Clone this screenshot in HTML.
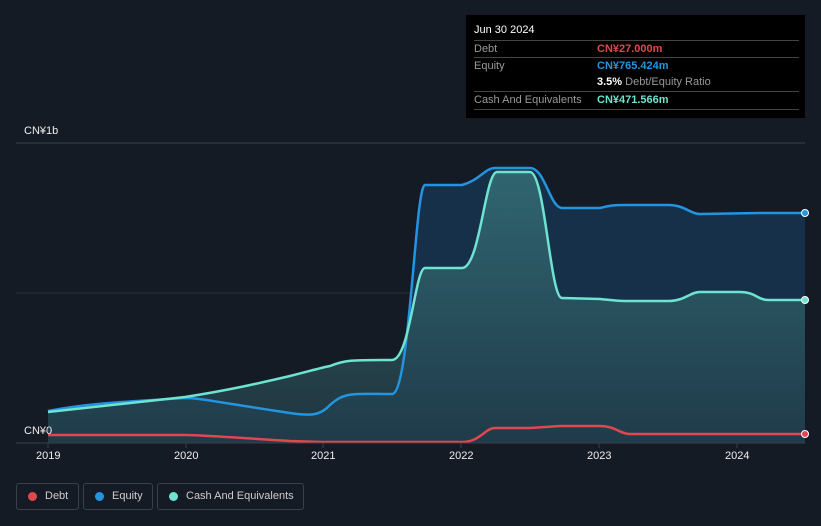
<!DOCTYPE html>
<html><head><meta charset="utf-8"><style>
html,body{margin:0;width:821px;height:526px;overflow:hidden}
body{background:#151b25;font-family:"Liberation Sans","Noto Sans CJK SC",sans-serif;position:relative}
.tt{position:absolute;left:466px;top:15px;width:339px;height:103px;background:#000;color:#fff;font-size:11px}
.row{position:absolute;left:8px;width:325px;border-top:1px solid #444;height:17px;line-height:17px;color:#999}
.row b{position:absolute;left:123px;font-weight:bold}
.lg{position:absolute;top:483px;height:27px;border:1px solid #3a404a;border-radius:3px;color:#ccc;font-size:11px;line-height:25px;box-sizing:border-box;white-space:nowrap}
.lg i{position:absolute;left:11px;top:8px;width:9px;height:9px;border-radius:50%}
.ax{position:absolute;top:450px;color:#eee;font-size:11px}
</style></head><body>
<svg width="821" height="526" style="position:absolute;left:0;top:0">
<defs>
<linearGradient id="c" x1="0" y1="0" x2="0" y2="1"><stop offset="0" stop-color="#3b7f82" stop-opacity=".9"/><stop offset="1" stop-color="#24404a" stop-opacity=".9"/></linearGradient>
</defs>
<line x1="16" y1="143" x2="805" y2="143" stroke="#3a404a"/>
<line x1="16" y1="293" x2="805" y2="293" stroke="#2c323c"/>
<path d="M48,411 C80,405 100,403 185,398 C200,398 210,401 290,413 C310,416 320,416 330,405 C345,392 350,394 392,394 C410,394 415,185 425,185 L462,185 C480,180 485,168 495,168 L530,168 C545,168 550,208 562,208 L600,208 C612,205 615,205 625,205 L668,205 C685,205 690,214 700,214 L760,213 L805,213 L805,443 L48,443Z" fill="#17304a"/>
<path d="M48,412 L185,397 C230,390 260,383 290,376 C310,371 320,368 330,366 C345,360 350,360 392,360 C410,360 415,268 425,268 L462,268 C480,268 485,172 497,172 L530,172 C545,172 550,298 562,298 L600,299 C612,300 615,301 625,301 L668,301 C685,301 690,292 700,292 L740,292 C755,292 758,300 768,300 L805,300 L805,443 L48,443Z" fill="url(#c)" opacity=".75"/>
<path d="M48,411 C80,405 100,403 185,398 C200,398 210,401 290,413 C310,416 320,416 330,405 C345,392 350,394 392,394 C410,394 415,185 425,185 L462,185 C480,180 485,168 495,168 L530,168 C545,168 550,208 562,208 L600,208 C612,205 615,205 625,205 L668,205 C685,205 690,214 700,214 L760,213 L805,213" fill="none" stroke="#2394df" stroke-width="2.5"/>
<path d="M48,412 L185,397 C230,390 260,383 290,376 C310,371 320,368 330,366 C345,360 350,360 392,360 C410,360 415,268 425,268 L462,268 C480,268 485,172 497,172 L530,172 C545,172 550,298 562,298 L600,299 C612,300 615,301 625,301 L668,301 C685,301 690,292 700,292 L740,292 C755,292 758,300 768,300 L805,300" fill="none" stroke="#6de3d0" stroke-width="2.5"/>
<path d="M48,435 L185,435 C200,435 210,436 290,441 L322,442 L462,442 C480,442 485,428 495,428 L530,428 L560,426 L600,426 C615,426 620,434 630,434 L805,434" fill="none" stroke="#e0474f" stroke-width="2.5"/>
<line x1="16" y1="443" x2="805" y2="443" stroke="#3a404a"/>
<circle cx="805" cy="213" r="3.5" fill="#2394df" stroke="#fff"/>
<circle cx="805" cy="300" r="3.5" fill="#6de3d0" stroke="#fff"/>
<circle cx="805" cy="434" r="3.5" fill="#e0474f" stroke="#fff"/>
<g stroke="#3a404a"><line x1="48" y1="443" x2="48" y2="448"/><line x1="186" y1="443" x2="186" y2="448"/><line x1="323" y1="443" x2="323" y2="448"/><line x1="461" y1="443" x2="461" y2="448"/><line x1="599" y1="443" x2="599" y2="448"/><line x1="737" y1="443" x2="737" y2="448"/></g>
</svg>
<div style="position:absolute;left:24px;top:125px;color:#eee;font-size:11px">CN¥1b</div>
<div style="position:absolute;left:24px;top:425px;color:#eee;font-size:11px">CN¥0</div>
<div class="ax" style="left:36px">2019</div><div class="ax" style="left:174px">2020</div><div class="ax" style="left:311px">2021</div><div class="ax" style="left:449px">2022</div><div class="ax" style="left:587px">2023</div><div class="ax" style="left:725px">2024</div>
<div class="tt">
<div style="position:absolute;left:8px;top:9px;font-size:11px">Jun 30 2024</div>
<div class="row" style="top:25px">Debt<b style="color:#e0474f">CN¥27.000m</b></div>
<div class="row" style="top:42px">Equity<b style="color:#2394df">CN¥765.424m</b></div>
<div class="row" style="top:59px;border-top:none"><b style="color:#fff">3.5% <span style="color:#999;font-weight:normal">Debt/Equity Ratio</span></b></div>
<div class="row" style="top:76px;border-bottom:1px solid #444">Cash And Equivalents<b style="color:#6de3d0">CN¥471.566m</b></div>
</div>
<div class="lg" style="left:16px;width:63px"><i style="background:#e0474f"></i><span style="margin-left:28px">Debt</span></div>
<div class="lg" style="left:83px;width:70px"><i style="background:#2394df"></i><span style="margin-left:28px">Equity</span></div>
<div class="lg" style="left:157px;width:147px"><i style="background:#6de3d0"></i><span style="margin-left:28px">Cash And Equivalents</span></div>
</body></html>
